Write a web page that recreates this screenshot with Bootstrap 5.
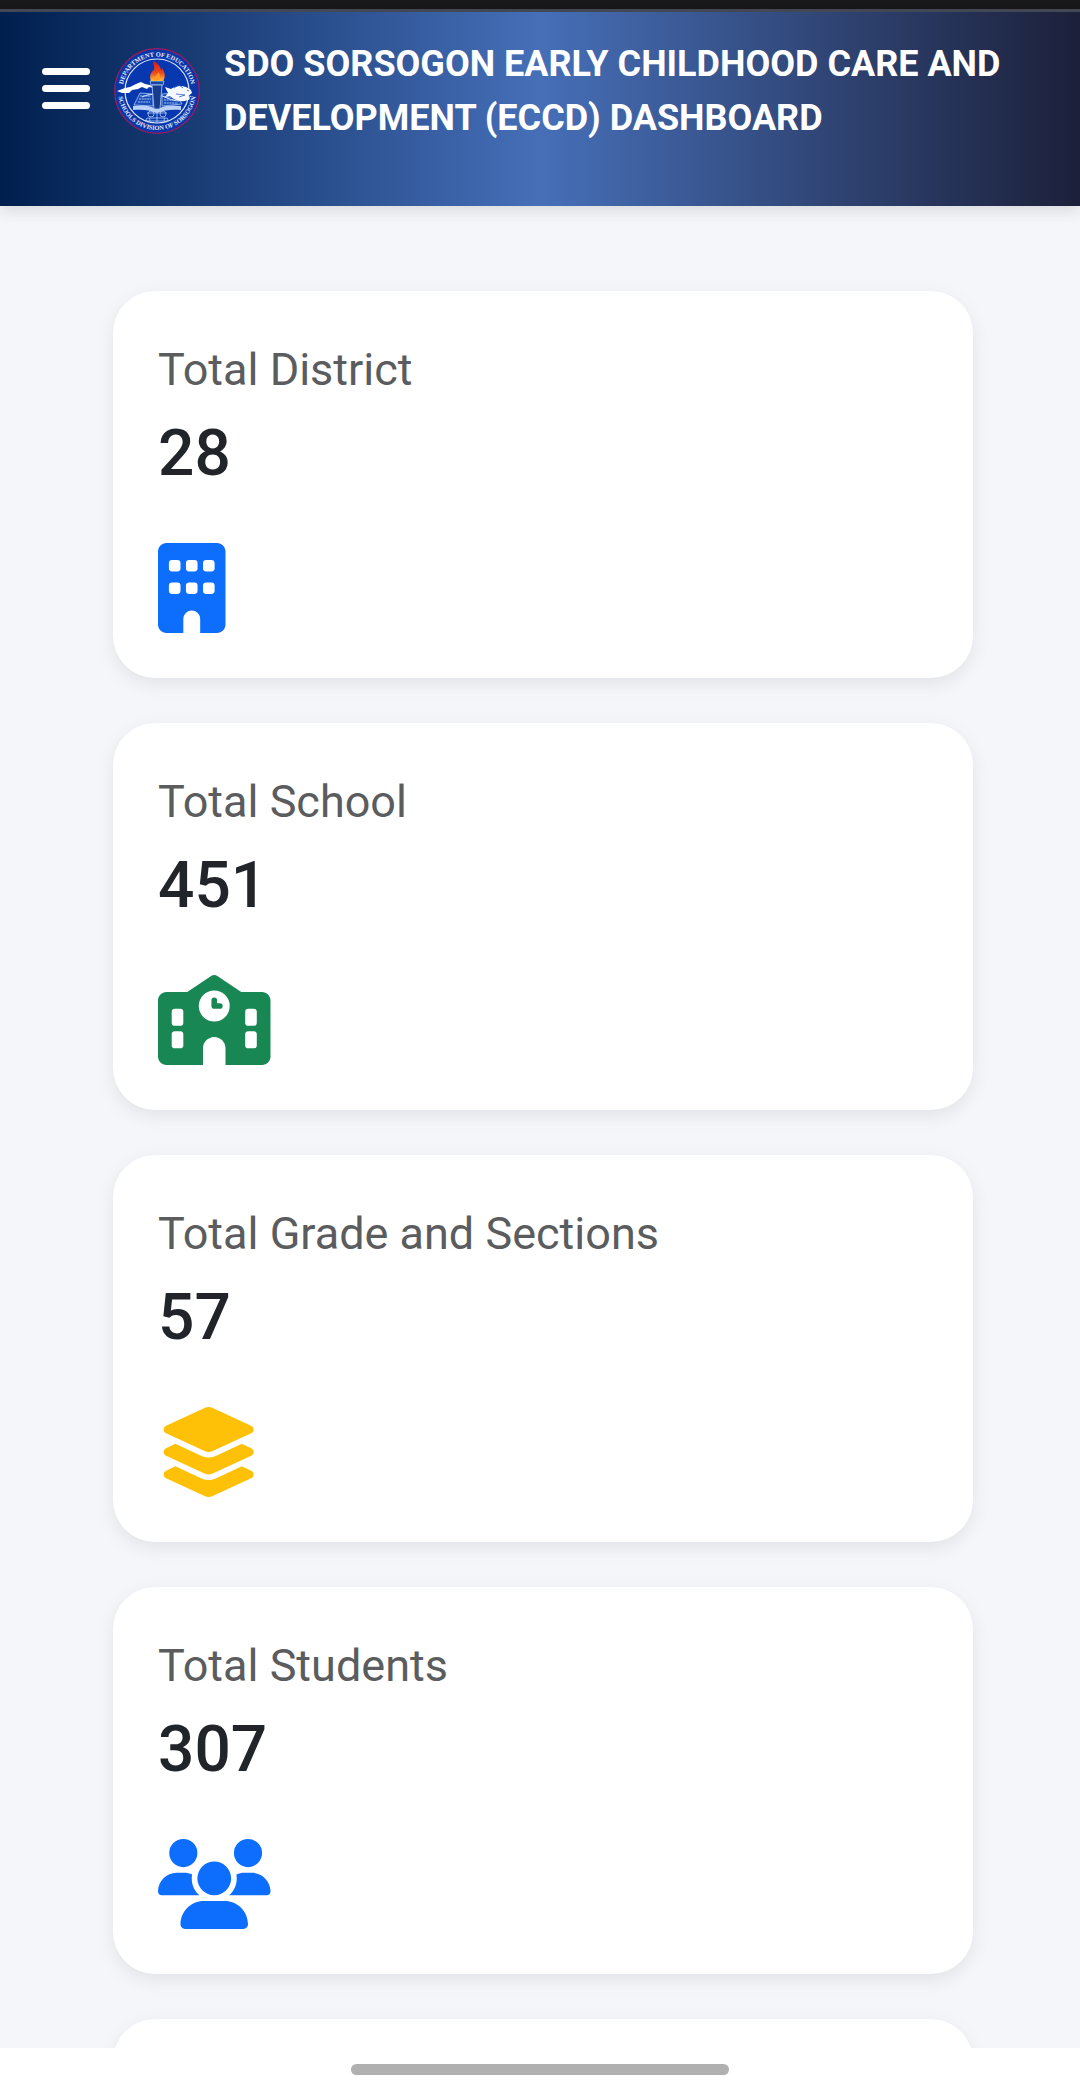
<!DOCTYPE html>
<html lang="en">
<head>
<meta charset="utf-8">
<meta name="viewport" content="width=device-width, initial-scale=1">
<title>SDO Sorsogon ECCD Dashboard</title>
<link href="https://cdn.jsdelivr.net/npm/bootstrap@5.3.0/dist/css/bootstrap.min.css" rel="stylesheet">
<style>
  body { font-family: Roboto, "Liberation Sans", sans-serif; background: #f4f6fa; }
  .status-strip { height: 12px; background: #18181a; border-bottom: 3px solid #454955; }
  .top-header {
    padding: 25px 24px 61px 42px;
    background: linear-gradient(to right, #001f4f, #466fb8 50%, #1c203a);
    box-shadow: 0 6px 14px rgba(0, 0, 0, .1);
    z-index: 2;
  }
  .menu-toggle { width: 48px; margin-right: 24px; margin-bottom: 4px; }
  .menu-toggle svg { width: 48px; height: 42px; }
  .seal { width: 86px; height: 86px; margin-right: 24px; }
  .site-title { font-size: 36px; line-height: 54px; }
  .dashboard { padding: 85px 107px 0 113px; min-height: 0; }
  .stats { gap: 45px; }
  .stat-card { border-radius: 42px; box-shadow: 0 6px 18px rgba(0, 0, 0, .08); padding: 45px; min-height: 387px; }
  .stat-label { font-size: 45px; line-height: 68px; margin-bottom: 11px; color: #5a5c5e; }
  .stat-value { font-size: 64px; line-height: 77px; margin-bottom: 51px; color: #212529; }
  .stat-icon { height: 90px; align-self: flex-start; }
  .gesture-bar { height: 42px; z-index: 3; }
  .gesture-pill { width: 35%; height: 11px; margin-top: 8px; background: #b0b0b0; }
</style>
<script src="https://cdn.jsdelivr.net/npm/bootstrap@5.3.0/dist/js/bootstrap.bundle.min.js"></script>
</head>
<body class="d-flex flex-column vh-100 overflow-hidden">

<div class="status-strip flex-shrink-0"></div>

<header class="top-header d-flex align-items-center flex-shrink-0 position-relative">
  <button type="button" class="menu-toggle btn p-0 border-0 text-white flex-shrink-0" aria-label="Open menu">
    <svg class="d-block" viewBox="0 0 48 42" fill="currentColor" aria-hidden="true">
      <rect y="0" width="48" height="7" rx="3.5"/><rect y="17" width="48" height="7" rx="3.5"/><rect y="34" width="48" height="7" rx="3.5"/>
    </svg>
  </button>
  <svg class="seal flex-shrink-0" viewBox="0 0 86 86" role="img" aria-label="Schools Division of Sorsogon seal">
    <defs>
      <path id="arcTop" d="M8.5 43a34.5 34.5 0 0 1 69 0"/>
      <path id="arcBottom" d="M4 43a39 39 0 0 0 78 0"/>
      <linearGradient id="fire" x1="0" y1="0" x2="0" y2="1"><stop offset="0" stop-color="#d81818"/><stop offset=".6" stop-color="#f04a18"/><stop offset="1" stop-color="#ffc238"/></linearGradient>
    </defs>
    <circle cx="43" cy="43" r="42.3" fill="#0a36a8" stroke="#a01c5c" stroke-width="1.2"/>
    <circle cx="43" cy="43" r="32" fill="#0838b0" stroke="#dbe8ff" stroke-width="1.2"/>
    <g fill="#e4edff" font-family="'Liberation Serif', serif" font-weight="700" font-size="6.4">
      <text text-anchor="middle"><textPath href="#arcTop" startOffset="50%">DEPARTMENT OF EDUCATION</textPath></text>
      <text text-anchor="middle"><textPath href="#arcBottom" startOffset="50%">SCHOOLS DIVISION OF SORSOGON</textPath></text>
    </g>
    <path d="M3 43l8-3 5-1 6-3 5-2 4 2 5 1 4 3-5-1-2 2-5-2-4 2-6 1-3 3H8z" fill="#fff"/>
    <path d="M26 45l13 1v12l-19-1zM48 46l14-1 6 11-20 2z" fill="#174bb8" stroke="#a9c5f4" stroke-width=".8"/>
    <path d="M26 48h11M25 51h12M24 54h12M50 49h10M50 52h12M50 55h14" stroke="#a9c5f4" stroke-width="1.2" stroke-dasharray="2 .7"/>
    <path d="M19 58c9-1 16-1 24 3 8-4 15-4 24-3v4c-9-1-17 0-24 3-7-3-15-4-24-3z" fill="#b9d0f8"/>
    <path d="M28 49c10-5 19-2 25 1 9 4 17 4 24-2" fill="none" stroke="#dce8ff" stroke-width="1"/>
    <path d="M51 39l6 2c6-4 14-4 20 1l1 3-4 3 2 3c-6 4-15 2-20-3l-5 1 3-4z" fill="#f5f8ff"/>
    <path d="M60 40l5-3 4 3M62 46l9 1-6 2M73 42l2 1" fill="none" stroke="#315fba" stroke-width=".8"/>
    <path d="M36 33h14l-1 4H37z" fill="#1645a8" stroke="#a9c5f4" stroke-width=".8"/>
    <path d="M38 37h10l-2 24h-6z" fill="#173b8d" stroke="#b9d0f8" stroke-width=".8"/>
    <path d="M43 62v13M33 65h20M35 70h16M31 73h23" stroke="#b9d0f8" stroke-width=".8"/>
    <g fill="none" stroke="#b9d0f8" stroke-width=".8"><circle cx="37" cy="66" r="3"/><circle cx="49" cy="66" r="3"/><circle cx="34" cy="72" r="2"/><circle cx="52" cy="72" r="2"/></g>
    <path d="M37 33c-2-5 0-9 3-11 1-3-1-6-1-9 5 2 8 6 8 10l1-3c4 6 3 10 1 13z" fill="url(#fire)"/>
    <path d="M40 32c0-4 4-5 4-8 3 3 2 6 1 8z" fill="#ff9a28"/>
  </svg>
  <h1 class="site-title mb-0 fw-bold text-white">SDO SORSOGON EARLY CHILDHOOD CARE AND DEVELOPMENT (ECCD) DASHBOARD</h1>
</header>

<main class="dashboard flex-fill overflow-hidden">
  <div class="stats d-flex flex-column">
    <section class="stat-card card border-0">
      <h2 class="stat-label fw-normal">Total District</h2>
      <p class="stat-value fw-medium">28</p>
      <svg class="stat-icon text-primary" viewBox="0 0 384 512" fill="currentColor" aria-hidden="true">
        <path d="M48 0C21.5 0 0 21.5 0 48v416c0 26.5 21.5 48 48 48h96v-80a48 48 0 0 1 96 0v80h96c26.5 0 48-21.5 48-48V48c0-26.5-21.5-48-48-48z"/>
        <g fill="#fff"><rect x="62" y="96" width="66" height="66" rx="18"/><rect x="159" y="96" width="66" height="66" rx="18"/><rect x="256" y="96" width="66" height="66" rx="18"/><rect x="62" y="224" width="66" height="66" rx="18"/><rect x="159" y="224" width="66" height="66" rx="18"/><rect x="256" y="224" width="66" height="66" rx="18"/></g>
      </svg>
    </section>

    <section class="stat-card card border-0">
      <h2 class="stat-label fw-normal">Total School</h2>
      <p class="stat-value fw-medium">451</p>
      <svg class="stat-icon text-success" viewBox="0 0 640 512" fill="currentColor" aria-hidden="true">
        <path d="M337.8 5.4C327-1.8 313-1.8 302.2 5.4L166.3 96H48C21.5 96 0 117.5 0 144v320c0 26.5 21.5 48 48 48h208v-96c0-35.3 28.7-64 64-64s64 28.7 64 64v96h208c26.5 0 48-21.5 48-48V144c0-26.5-21.5-48-48-48H473.7z"/>
        <g fill="#fff"><circle cx="320" cy="176" r="88"/><rect x="78" y="192" width="66" height="97" rx="18"/><rect x="78" y="320" width="66" height="97" rx="18"/><rect x="496" y="192" width="66" height="97" rx="18"/><rect x="496" y="320" width="66" height="97" rx="18"/></g>
        <path d="M336 144v16h16a16 16 0 0 1 0 32h-32a16 16 0 0 1-16-16v-32a16 16 0 0 1 32 0z"/>
      </svg>
    </section>

    <section class="stat-card card border-0">
      <h2 class="stat-label fw-normal">Total Grade and Sections</h2>
      <p class="stat-value fw-medium">57</p>
      <svg class="stat-icon text-warning" viewBox="0 0 576 512" fill="currentColor" aria-hidden="true">
        <path d="M264.5 5.2c14.9-6.9 32.1-6.9 47 0l218.6 101c8.5 3.9 13.9 12.4 13.9 21.8s-5.4 17.9-13.9 21.8l-218.6 101c-14.9 6.9-32.1 6.9-47 0L45.9 149.8C37.4 145.8 32 137.3 32 128s5.4-17.9 13.9-21.8L264.5 5.2zM476.9 209.6l53.2 24.6c8.5 3.9 13.9 12.4 13.9 21.8s-5.4 17.9-13.9 21.8l-218.6 101c-14.9 6.9-32.1 6.9-47 0L45.9 277.8C37.4 273.8 32 265.3 32 256s5.4-17.9 13.9-21.8l53.2-24.6 152 70.2c23.4 10.8 50.4 10.8 73.8 0l152-70.2zm-152 198.2l152-70.2 53.2 24.6c8.5 3.9 13.9 12.4 13.9 21.8s-5.4 17.9-13.9 21.8l-218.6 101c-14.9 6.9-32.1 6.9-47 0L45.9 405.8C37.4 401.8 32 393.3 32 384s5.4-17.9 13.9-21.8l53.2-24.6 152 70.2c23.4 10.8 50.4 10.8 73.8 0z"/>
      </svg>
    </section>

    <section class="stat-card card border-0">
      <h2 class="stat-label fw-normal">Total Students</h2>
      <p class="stat-value fw-medium">307</p>
      <svg class="stat-icon text-primary" viewBox="0 0 640 512" fill="currentColor" aria-hidden="true">
        <path d="M144 0a80 80 0 1 1 0 160A80 80 0 1 1 144 0zM512 0a80 80 0 1 1 0 160A80 80 0 1 1 512 0zM0 298.7C0 239.8 47.8 192 106.7 192h42.7c15.9 0 31 3.5 44.6 9.7-1.3 7.2-1.9 14.7-1.9 22.3 0 38.2 16.8 72.5 43.3 96H21.3C9.6 320 0 310.4 0 298.7zM405.3 320h-.7c26.6-23.5 43.3-57.8 43.3-96 0-7.6-.7-15-1.9-22.3 13.6-6.3 28.7-9.7 44.6-9.7h42.7C592.2 192 640 239.8 640 298.7c0 11.8-9.6 21.3-21.3 21.3H405.3zM224 224a96 96 0 1 1 192 0 96 96 0 1 1-192 0zM128 485.3C128 411.7 187.7 352 261.3 352h117.4C452.3 352 512 411.7 512 485.3c0 14.7-11.9 26.7-26.7 26.7H154.7c-14.7 0-26.7-11.9-26.7-26.7z"/>
      </svg>
    </section>

    <section class="stat-card card border-0"></section>
  </div>
</main>

<footer class="gesture-bar bg-white flex-shrink-0 d-flex justify-content-center align-items-start pt-2 mt-auto">
  <div class="gesture-pill rounded-pill"></div>
</footer>

</body>
</html>
